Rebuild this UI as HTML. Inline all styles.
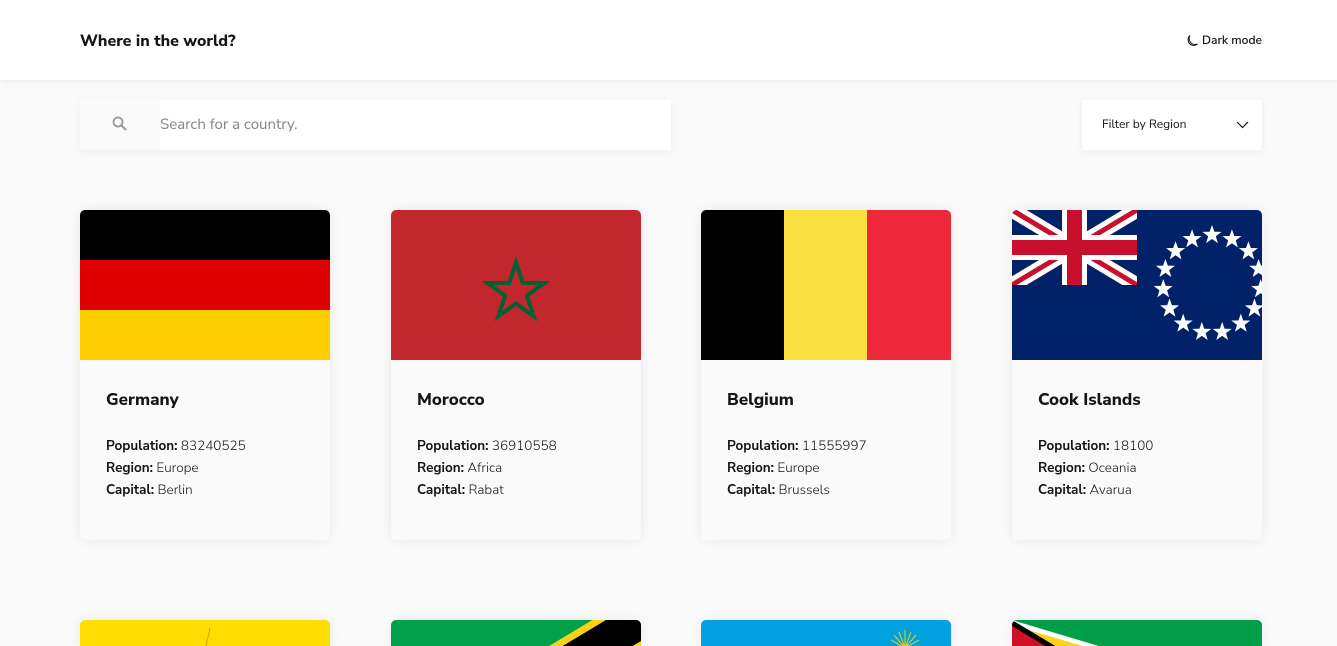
<!DOCTYPE html>
<html><head><meta charset="utf-8"><style>
*{margin:0;padding:0;box-sizing:border-box}
html,body{width:1337px;height:646px;overflow:hidden}
body{background:#fafafa;font-family:"Nunito Sans","Liberation Sans",sans-serif;color:#111517;position:relative}
.hdr{position:absolute;left:0;top:0;width:1337px;height:80px;background:#fff;box-shadow:0 2px 4px rgba(0,0,0,.06)}
.hdr h1{position:absolute;left:80px;top:30px;font-size:16px;font-weight:800}
.dm{position:absolute;right:75px;top:33px;font-size:12px;font-weight:600;display:flex;align-items:center;gap:3px}
.search{position:absolute;left:80px;top:100px;width:591px;height:50px;background:#fff;box-shadow:0 2px 9px rgba(0,0,0,.05)}
.search .ic{position:absolute;left:0;top:0;width:80px;height:50px;background:#fafafa}
.search span{position:absolute;left:80px;top:15px;font-size:15px;color:#848484}
.filter{position:absolute;left:1082px;top:100px;width:180px;height:50px;background:#fff;box-shadow:0 2px 9px rgba(0,0,0,.05);font-size:12px;color:#111517}
.filter span{position:absolute;left:20px;top:17px}
.card{position:absolute;width:250px;height:330px;border-radius:5px;overflow:hidden;background:#fafafa;box-shadow:0 0 12px rgba(0,0,0,.07)}
.card.r2{height:26px;border-radius:5px 5px 0 0}
.card svg{display:block}
.card h2{position:absolute;left:26px;top:179px;font-size:17px;font-weight:800}
.card p{position:absolute;left:26px;font-size:13.5px;font-weight:300}
.card p b{font-weight:700}
</style></head><body>
<div class="hdr"><h1>Where in the world?</h1>
<div class="dm"><svg width="14" height="14" viewBox="0 0 14 14"><path d="M5 1.5A6 6 0 0 0 12.5 10 A5.5 5.5 0 1 1 5 1.5Z" fill="none" stroke="#111" stroke-width="1"/></svg>Dark mode</div></div>
<div class="search"><div class="ic"><svg style="position:absolute;left:32px;top:16px" width="16" height="16" viewBox="0 0 16 16"><circle cx="6" cy="6" r="4.5" fill="none" stroke="#999" stroke-width="1.8"/><path d="M9.5 9.5L14 14" stroke="#999" stroke-width="2"/></svg></div><span>Search for a country.</span></div>
<div class="filter"><span>Filter by Region</span><svg style="position:absolute;left:154px;top:20px" width="13" height="10" viewBox="0 0 13 10"><path d="M1 2l5.5 5.5L12 2" fill="none" stroke="#111" stroke-width="1.2"/></svg></div>

<div class="card" style="left:80px;top:210px"><svg width="250" height="150"><rect width="250" height="50" fill="#000"/><rect y="50" width="250" height="50" fill="#dd0000"/><rect y="100" width="250" height="50" fill="#ffce00"/></svg>
<h2>Germany</h2><p style="top:226px"><b>Population:</b> 83240525</p><p style="top:248px"><b>Region:</b> Europe</p><p style="top:270px"><b>Capital:</b> Berlin</p></div>

<div class="card" style="left:391px;top:210px"><svg width="250" height="150"><rect width="250" height="150" fill="#c1272d"/><g transform="translate(125,77) scale(0.88) translate(-125,-77)"><polygon points="125,49 132.6,72.4 157.3,72.4 137.4,86.8 145,110.2 125,95.8 105,110.2 112.6,86.8 92.7,72.4 117.4,72.4" fill="none" stroke="#006233" stroke-width="4.5"/></g></svg>
<h2>Morocco</h2><p style="top:226px"><b>Population:</b> 36910558</p><p style="top:248px"><b>Region:</b> Africa</p><p style="top:270px"><b>Capital:</b> Rabat</p></div>

<div class="card" style="left:701px;top:210px"><svg width="250" height="150"><rect width="84" height="150" fill="#000"/><rect x="83" width="84" height="150" fill="#fae042"/><rect x="166" width="84" height="150" fill="#ed2939"/></svg>
<h2>Belgium</h2><p style="top:226px"><b>Population:</b> 11555997</p><p style="top:248px"><b>Region:</b> Europe</p><p style="top:270px"><b>Capital:</b> Brussels</p></div>

<div class="card" style="left:1012px;top:210px"><svg width="250" height="150"><defs><polygon id="s" points="0,-10 2.4,-3.2 9.5,-3.1 3.8,1.2 5.9,8.1 0,4 -5.9,8.1 -3.8,1.2 -9.5,-3.1 -2.4,-3.2" fill="#fff"/><clipPath id="uj"><rect width="125" height="75"/></clipPath></defs><rect width="250" height="150" fill="#012169"/>
<g clip-path="url(#uj)"><path d="M0 0L125 75M125 0L0 75" stroke="#fff" stroke-width="15"/><path d="M0 0L125 75M125 0L0 75" stroke="#c8102e" stroke-width="5"/><path d="M62.5 0V75M0 37.5H125" stroke="#fff" stroke-width="25"/><path d="M62.5 0V75M0 37.5H125" stroke="#c8102e" stroke-width="15"/></g>
<g transform="translate(200,74)">
<use href="#s" transform="rotate(0) translate(0,-49)"/><use href="#s" transform="rotate(24) translate(0,-49) rotate(-24)"/><use href="#s" transform="rotate(48) translate(0,-49) rotate(-48)"/><use href="#s" transform="rotate(72) translate(0,-49) rotate(-72)"/><use href="#s" transform="rotate(96) translate(0,-49) rotate(-96)"/><use href="#s" transform="rotate(120) translate(0,-49) rotate(-120)"/><use href="#s" transform="rotate(144) translate(0,-49) rotate(-144)"/><use href="#s" transform="rotate(168) translate(0,-49) rotate(-168)"/><use href="#s" transform="rotate(192) translate(0,-49) rotate(-192)"/><use href="#s" transform="rotate(216) translate(0,-49) rotate(-216)"/><use href="#s" transform="rotate(240) translate(0,-49) rotate(-240)"/><use href="#s" transform="rotate(264) translate(0,-49) rotate(-264)"/><use href="#s" transform="rotate(288) translate(0,-49) rotate(-288)"/><use href="#s" transform="rotate(312) translate(0,-49) rotate(-312)"/><use href="#s" transform="rotate(336) translate(0,-49) rotate(-336)"/></g></svg>
<h2>Cook Islands</h2><p style="top:226px"><b>Population:</b> 18100</p><p style="top:248px"><b>Region:</b> Oceania</p><p style="top:270px"><b>Capital:</b> Avarua</p></div>

<div class="card r2" style="left:80px;top:620px"><svg width="250" height="150"><rect width="250" height="150" fill="#ffdd00"/><path d="M130 8L126 26" stroke="#c9a400" stroke-width="1"/></svg></div>
<div class="card r2" style="left:391px;top:620px"><svg width="250" height="150"><rect width="250" height="150" fill="#00a04a"/><polygon points="250,0 250,150 0,150" fill="#00a3dd"/><path d="M0 150L250 0" stroke="#fcd116" stroke-width="50"/><path d="M0 150L250 0" stroke="#000" stroke-width="36"/></svg></div>
<div class="card r2" style="left:701px;top:620px"><svg width="250" height="150"><rect width="250" height="150" fill="#00a1de"/><g stroke="#fad201" stroke-width="1"><path d="M204 28L204 10M204 28L198 12M204 28L210 12M204 28L193 15M204 28L215 15M204 28L190 20M204 28L218 20"/></g></svg></div>
<div class="card r2" style="left:1012px;top:620px"><svg width="250" height="150"><rect width="250" height="150" fill="#009e49"/><polygon points="0,0 250,75 0,150" fill="#fff"/><polygon points="0,5 235,75 0,145" fill="#fcd116"/><polygon points="0,0 125,75 0,150" fill="#000"/><polygon points="0,6 115,75 0,144" fill="#ce1126"/></svg></div>
</body></html>
